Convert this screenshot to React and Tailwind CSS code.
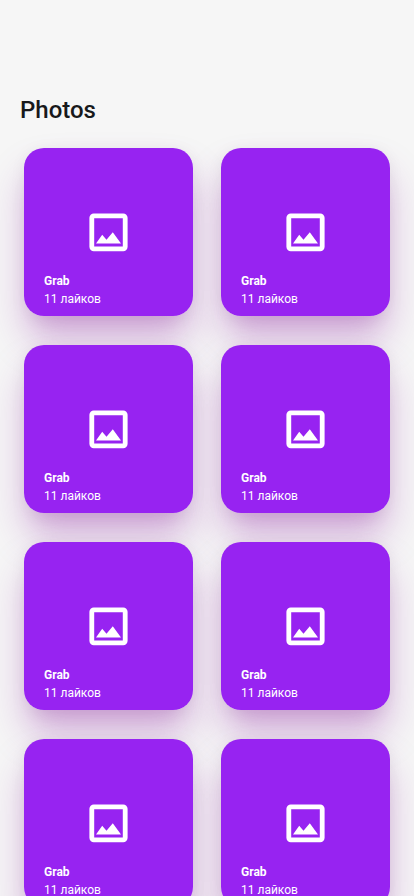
const photos = Array.from({ length: 8 }, (_, id) => ({ id, title: "Grab", likes: 11 }));

function ImageIcon() {
  return (
    <svg viewBox="0 0 39 39" className="size-[39px]" fill="none" aria-hidden="true">
      <rect x="2.8" y="2.8" width="33.4" height="33" rx="2" stroke="white" strokeWidth="4.8" />
      <path d="M7 30.5 L13.2 21.8 L17.5 26.8 L23.8 19.3 L32 30.5 Z" fill="white" />
    </svg>
  );
}

function PhotoCard({ title, likes }) {
  return (
    <li className="relative flex h-[168px] items-center justify-center rounded-[20px] bg-[#9723f1] before:absolute before:inset-0 before:-z-10 before:rounded-[20px] before:shadow-[0_25px_40px_0_rgba(135,10,160,0.23),0_24px_24px_-12px_rgba(125,0,143,0.16),0_2px_16px_0_rgba(0,0,0,0.06)]">
      <ImageIcon />
      <div className="absolute bottom-2 left-5 text-xs leading-[18px] text-white">
        <h2 className="font-bold">{title}</h2>
        <p>{likes} лайков</p>
      </div>
    </li>
  );
}

export default function App() {
  return (
    <main className="min-h-screen bg-[#f6f6f6] pt-[92px] pb-7 font-[Roboto,sans-serif]">
      <h1 className="px-5 text-2xl leading-9 font-medium text-[#18191b]">Photos</h1>
      <ul className="isolate mt-5 grid grid-cols-2 gap-x-7 gap-y-[29px] px-6">
        {photos.map((photo) => (
          <PhotoCard key={photo.id} title={photo.title} likes={photo.likes} />
        ))}
      </ul>
    </main>
  );
}
